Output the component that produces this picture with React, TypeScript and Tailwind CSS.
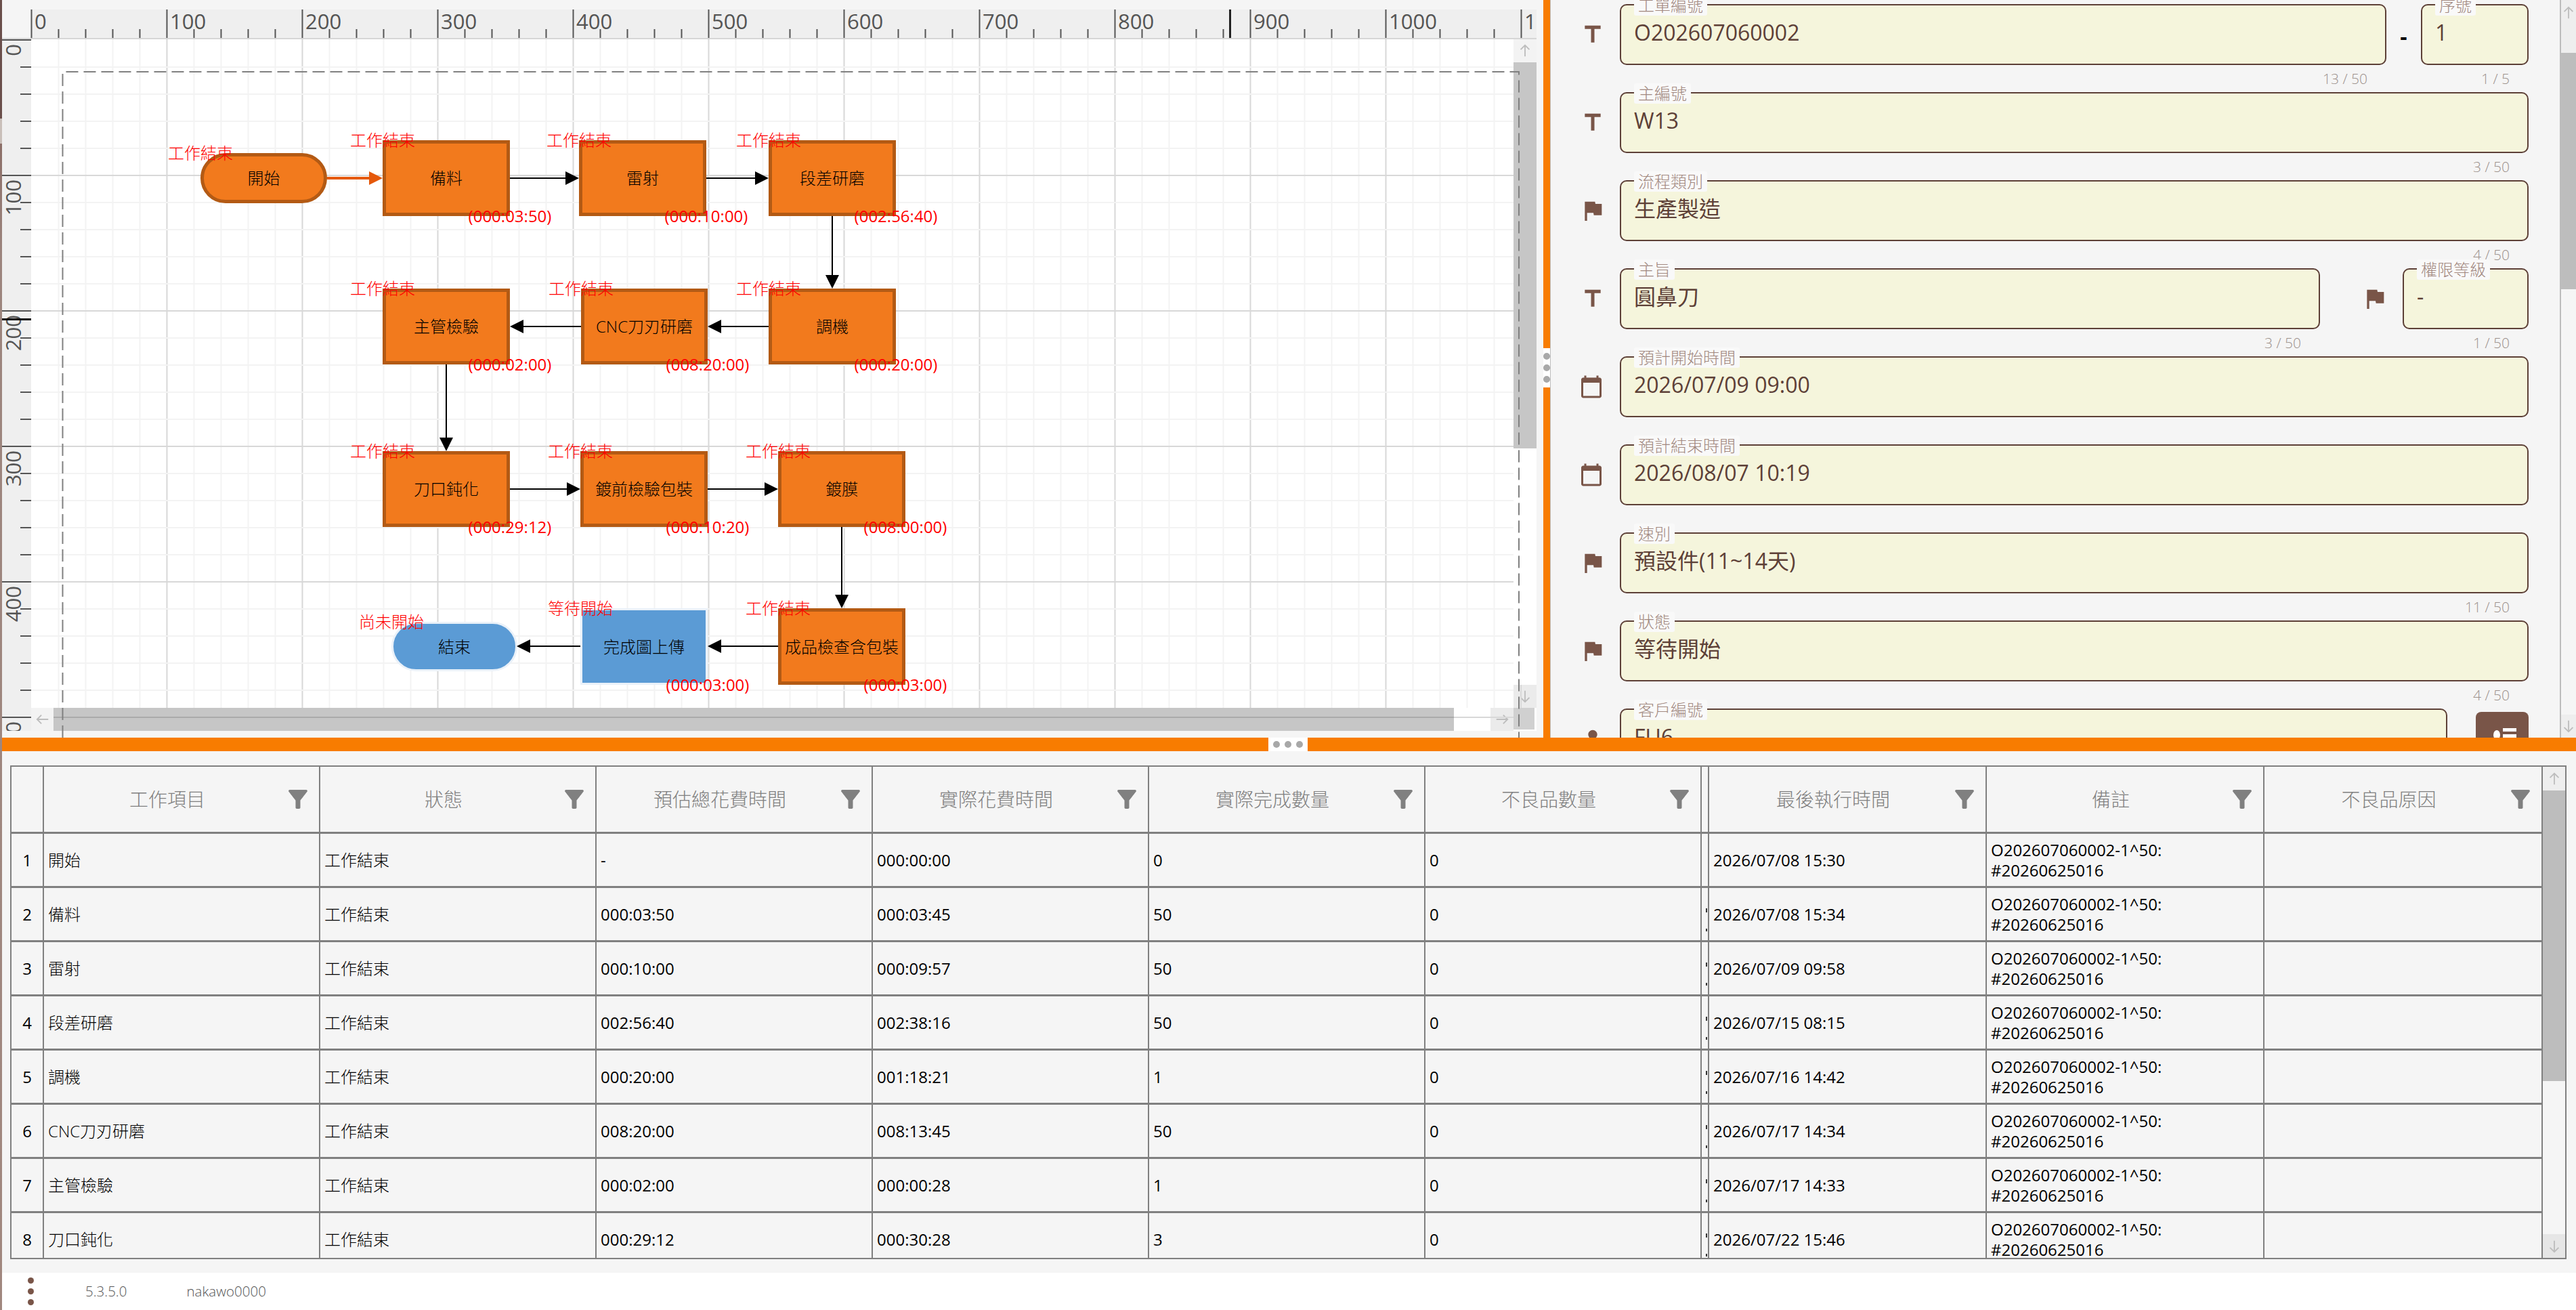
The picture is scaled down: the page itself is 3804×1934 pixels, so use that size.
import React from "react";

type FlowNode = {
  name: string;
  x: number;
  y: number;
  w: number;
  h: number;
  pill?: boolean;
  blue?: boolean;
  status: string;
  time?: string;
};

const nodes: FlowNode[] = [
  { name: "開始", x: 296, y: 226, w: 187, h: 74, pill: true, status: "工作結束" },
  { name: "備料", x: 565, y: 207, w: 188, h: 112, status: "工作結束", time: "(000:03:50)" },
  { name: "雷射", x: 855, y: 207, w: 188, h: 112, status: "工作結束", time: "(000:10:00)" },
  { name: "段差研磨", x: 1135, y: 207, w: 188, h: 112, status: "工作結束", time: "(002:56:40)" },
  { name: "主管檢驗", x: 565, y: 426, w: 188, h: 112, status: "工作結束", time: "(000:02:00)" },
  { name: "CNC刀刃研磨", x: 858, y: 426, w: 187, h: 112, status: "工作結束", time: "(008:20:00)" },
  { name: "調機", x: 1135, y: 426, w: 188, h: 112, status: "工作結束", time: "(000:20:00)" },
  { name: "刀口鈍化", x: 565, y: 666, w: 188, h: 112, status: "工作結束", time: "(000:29:12)" },
  { name: "鍍前檢驗包裝", x: 857, y: 666, w: 188, h: 112, status: "工作結束", time: "(000:10:20)" },
  { name: "鍍膜", x: 1149, y: 666, w: 188, h: 112, status: "工作結束", time: "(008:00:00)" },
  { name: "結束", x: 578, y: 918, w: 186, h: 73, pill: true, blue: true, status: "尚未開始" },
  { name: "完成圖上傳", x: 857, y: 898, w: 188, h: 113, blue: true, status: "等待開始", time: "(000:03:00)" },
  { name: "成品檢查含包裝", x: 1149, y: 898, w: 188, h: 113, status: "工作結束", time: "(000:03:00)" },
];

// x1,y1 -> x2,y2 where x2,y2 is the arrow tip
const arrows = [
  [483, 263, 565, 263, "#e5590b"],
  [753, 263, 855, 263, "#000"],
  [1043, 263, 1135, 263, "#000"],
  [1229, 319, 1229, 426, "#000"],
  [1135, 482, 1045, 482, "#000"],
  [858, 482, 753, 482, "#000"],
  [659, 538, 659, 666, "#000"],
  [753, 722, 857, 722, "#000"],
  [1045, 722, 1149, 722, "#000"],
  [1243, 778, 1243, 898, "#000"],
  [1149, 954, 1045, 954, "#000"],
  [857, 954, 763, 954, "#000"],
] as [number, number, number, number, string][];

const rows = [
  ["1", "開始", "工作結束", "-", "000:00:00", "0", "0", "2026/07/08 15:30"],
  ["2", "備料", "工作結束", "000:03:50", "000:03:45", "50", "0", "2026/07/08 15:34"],
  ["3", "雷射", "工作結束", "000:10:00", "000:09:57", "50", "0", "2026/07/09 09:58"],
  ["4", "段差研磨", "工作結束", "002:56:40", "002:38:16", "50", "0", "2026/07/15 08:15"],
  ["5", "調機", "工作結束", "000:20:00", "001:18:21", "1", "0", "2026/07/16 14:42"],
  ["6", "CNC刀刃研磨", "工作結束", "008:20:00", "008:13:45", "50", "0", "2026/07/17 14:34"],
  ["7", "主管檢驗", "工作結束", "000:02:00", "000:00:28", "1", "0", "2026/07/17 14:33"],
  ["8", "刀口鈍化", "工作結束", "000:29:12", "000:30:28", "3", "0", "2026/07/22 15:46"],
];

const range = (n: number) => Array.from({ length: n }, (_, i) => i);

const TitleIcon = () => (
  <svg viewBox="0 0 24 24" className="h-[40px] w-[40px] fill-[#795548]">
    <path d="M5 4v3h5.5v12h3V7H19V4z" />
  </svg>
);

const FlagIcon = () => (
  <svg viewBox="0 0 24 24" className="h-[40px] w-[40px] fill-[#795548]">
    <path d="M14.4 6L14 4H5v17h2v-7h5.6l.4 2h7V6z" />
  </svg>
);

const CalendarIcon = () => (
  <svg viewBox="0 0 24 24" className="h-[36px] w-[36px] fill-[#795548]">
    <path d="M20 3h-1V1h-2v2H7V1H5v2H4c-1.1 0-2 .9-2 2v16c0 1.1.9 2 2 2h16c1.1 0 2-.9 2-2V5c0-1.1-.9-2-2-2zm0 18H4V8h16v13z" />
  </svg>
);

const PersonIcon = () => (
  <svg viewBox="0 0 24 24" className="h-[40px] w-[40px] fill-[#795548]">
    <path d="M12 12c2.2 0 4-1.8 4-4s-1.8-4-4-4-4 1.8-4 4 1.8 4 4 4zm0 2c-2.7 0-8 1.3-8 4v2h16v-2c0-2.7-5.3-4-8-4z" />
  </svg>
);

const FilterIcon = () => (
  <svg viewBox="0 0 24 24" className="h-[42px] w-[42px] shrink-0 fill-[#808080]">
    <path d="M4.25 5.61C6.27 8.2 10 13 10 13v6c0 .55.45 1 1 1h2c.55 0 1-.45 1-1v-6s3.72-4.8 5.74-7.39c.51-.66.04-1.61-.79-1.61H5.04c-.83 0-1.3.95-.79 1.61z" />
  </svg>
);

const Arrow = ({ dir }: { dir: "up" | "down" | "left" | "right" }) => {
  const d = {
    up: "M12 21V3M5 10l7-7 7 7",
    down: "M12 3v18M5 14l7 7 7-7",
    left: "M21 12H3M10 5l-7 7 7 7",
    right: "M3 12h18M14 5l7 7-7 7",
  }[dir];
  return (
    <svg viewBox="0 0 24 24" className="h-[22px] w-[22px] fill-none stroke-[#bdbdbd] stroke-2">
      <path d={d} />
    </svg>
  );
};

const Field = ({
  label,
  value,
  counter,
  className,
}: {
  label: string;
  value: string;
  counter?: string;
  className: string;
}) => (
  <div className={`relative flex h-[90px] items-center rounded-[10px] border-2 border-[#5d4037] bg-[#f5f5dc] pb-[6px] pl-[19px] text-[32px] text-[#5d4037] ${className}`}>
    {value}
    <span className="absolute left-[19px] top-[-15px] h-[30px] rounded-[3px] bg-[#f9f9f9] px-[6px] text-[24px] font-light leading-[30px] text-[#a1887f]">
      {label}
    </span>
    {counter && (
      <span className="absolute right-[26px] top-[99px] text-[21px] font-light leading-[18px] text-[#9c918c]">
        {counter}
      </span>
    )}
  </div>
);

const FormRow = ({ icon, children }: { icon: React.ReactNode; children: React.ReactNode }) => (
  <div className="flex h-[130px] shrink-0 items-start">
    <div className="flex h-[90px] w-[102px] shrink-0 items-center pl-[42px]">{icon}</div>
    {children}
  </div>
);

const FormPanel = () => (
  <div className="flex h-full min-w-0 flex-1 bg-[#f5f5f5]">
    <div className="h-full flex-1 overflow-hidden pr-[46px] pt-[6px]">
      <FormRow icon={<TitleIcon />}>
        <Field label="工單編號" value="O202607060002" counter="13 / 50" className="w-[1132px]" />
        <div className="flex h-[90px] w-[51px] items-center justify-center pt-[6px] text-[32px] font-bold text-black">-</div>
        <Field label="序號" value="1" counter="1 / 5" className="w-[159px]" />
      </FormRow>
      <FormRow icon={<TitleIcon />}>
        <Field label="主編號" value="W13" counter="3 / 50" className="flex-1" />
      </FormRow>
      <FormRow icon={<FlagIcon />}>
        <Field label="流程類別" value="生產製造" counter="4 / 50" className="flex-1" />
      </FormRow>
      <FormRow icon={<TitleIcon />}>
        <Field label="主旨" value="圓鼻刀" counter="3 / 50" className="w-[1034px]" />
        <div className="flex h-[90px] w-[122px] items-center justify-center pl-[40px]">
          <FlagIcon />
        </div>
        <Field label="權限等級" value="-" counter="1 / 50" className="w-[186px]" />
      </FormRow>
      <FormRow icon={<CalendarIcon />}>
        <Field label="預計開始時間" value="2026/07/09 09:00" className="flex-1" />
      </FormRow>
      <FormRow icon={<CalendarIcon />}>
        <Field label="預計結束時間" value="2026/08/07 10:19" className="flex-1" />
      </FormRow>
      <FormRow icon={<FlagIcon />}>
        <Field label="速別" value="預設件(11~14天)" counter="11 / 50" className="flex-1" />
      </FormRow>
      <FormRow icon={<FlagIcon />}>
        <Field label="狀態" value="等待開始" counter="4 / 50" className="flex-1" />
      </FormRow>
      <FormRow icon={<PersonIcon />}>
        <Field label="客戶編號" value="FU6" className="w-[1222px]" />
        <div className="relative ml-[42px] mt-[5px] h-[80px] w-[78px] rounded-[8px] bg-[#795548]">
          <svg viewBox="0 0 36 40" className="absolute left-[26px] top-[22px] h-[40px] w-[36px] fill-white">
            <ellipse cx="5" cy="12" rx="5" ry="7" />
            <rect x="14" y="2" width="20" height="5" />
            <rect x="14" y="11" width="20" height="5" />
          </svg>
        </div>
      </FormRow>
    </div>
    <div className="flex h-full w-[24px] shrink-0 flex-col border-l-2 border-[#bdbdbd]">
      <div className="flex h-[78px] items-start justify-center bg-[#eeeeee] pt-[8px]">
        <Arrow dir="up" />
      </div>
      <div className="h-[349px] bg-[#bdbdbd]" />
      <div className="flex-1" />
      <div className="flex h-[34px] items-center justify-center bg-[#eeeeee]">
        <Arrow dir="down" />
      </div>
    </div>
  </div>
);

const Rulers = () => (
  <>
    <svg width={2269} height={44} className="absolute left-0 top-[14px]">
      <rect width={2269} height={44} fill="#efefef" />
      <rect x={3} width={43} height={44} fill="#f5f5f5" />
      {range(56).map((i) => {
        const x = 45.5 + i * 40;
        const major = i % 5 === 0;
        return <rect key={i} x={x} y={major ? 0 : 29} width={2} height={major ? 44 : 15} fill="#555" />;
      })}
      {range(12).map((i) => (
        <text key={i} x={51 + i * 200} y={29} fontSize={31} fontWeight={400} fill="#555">
          {i * 100}
        </text>
      ))}
      <rect x={1815} width={3} height={44} fill="#222" />
      <rect y={42} x={3} width={2266} height={2} fill="#d6d6d6" />
    </svg>
    <svg width={46} height={1021} className="absolute left-0 top-[58px]">
      <rect x={3} width={43} height={1021} fill="#efefef" />
      {range(26).map((i) => {
        const y = i * 40;
        const major = i % 5 === 0;
        return <rect key={i} x={major ? 3 : 30} y={y} width={major ? 43 : 16} height={2} fill="#555" />;
      })}
      {range(6).map((i) => (
        <text
          key={i}
          transform={`translate(31 ${i * 200 + 7}) rotate(-90)`}
          textAnchor="end"
          fontSize={31}
          fontWeight={400}
          fill="#555"
        >
          {i * 100}
        </text>
      ))}
      <rect x={3} y={412} width={43} height={3} fill="#111" />
    </svg>
  </>
);

const FlowCanvas = () => (
  <div className="relative h-full w-[2279px] shrink-0 overflow-hidden bg-[#f5f5f5]">
    <div className="absolute left-[46px] top-[58px] h-[1021px] w-[2223px] bg-white" />
    <Rulers />

    {/* canvas grid, page border and connectors */}
    <svg width={2279} height={1089} className="absolute left-0 top-0">
      {range(55).map((i) => {
        const x = 45.5 + i * 40;
        const major = i % 5 === 0;
        if (i === 0 || x > 2235) return null;
        return <rect key={i} x={x} y={58} width={2} height={987} fill={major ? "#d8d8d8" : "#f3f3f3"} />;
      })}
      {range(26).map((i) => {
        const y = 58 + i * 40;
        const major = i % 5 === 0;
        if (i === 0) return null;
        return <rect key={i} x={46} y={y} width={2189} height={2} fill={major ? "#d8d8d8" : "#f3f3f3"} />;
      })}
    </svg>

    {/* scrollbars */}
    <div className="absolute left-[2235px] top-[58px] flex h-[987px] w-[34px] flex-col">
      <div className="flex h-[34px] items-center justify-center bg-[#f3f3f3]">
        <Arrow dir="up" />
      </div>
      <div className="h-[570px] bg-[#c6c6c6]" />
      <div className="flex-1 bg-white" />
      <div className="flex h-[34px] items-center justify-center bg-[#ebebeb]">
        <Arrow dir="down" />
      </div>
    </div>
    <div className="absolute left-[46px] top-[1045px] flex h-[34px] w-[2189px]">
      <div className="flex w-[33px] items-center justify-center bg-[#f3f3f3]">
        <Arrow dir="left" />
      </div>
      <div className="w-[2068px] bg-[#c6c6c6]" />
      <div className="flex-1 bg-white" />
      <div className="flex w-[34px] items-center justify-center bg-[#ebebeb]">
        <Arrow dir="right" />
      </div>
    </div>
    <div className="absolute left-[2235px] top-[1045px] h-[32px] w-[31px] bg-[#d0d0d0]" />

    <svg width={2279} height={1089} className="absolute left-0 top-0">
      <rect x={79} y={1058} width={2068} height={2} fill="#aaaaaa" />
      <rect x={2147} y={1058} width={88} height={2} fill="#d8d8d8" />
      <rect x={2245} y={1011} width={2} height={34} fill="#d8d8d8" />
      <path
        d="M92.5 1089V106H2243V1089"
        fill="none"
        stroke="#808080"
        strokeWidth={2}
        strokeDasharray="18 8"
      />
    </svg>

    {nodes.map((n) => (
      <div
        key={n.name}
        className={`absolute flex items-center justify-center text-[24px] font-light text-black ${n.pill ? "rounded-[37px]" : ""} ${
          n.blue ? "border-[3px] border-[#eaf1f9] bg-[#5b9bd5]" : "border-[5px] border-[#b35a14] bg-[#f27a1d]"
        }`}
        style={{ left: n.x, top: n.y, width: n.w, height: n.h }}
      >
        <span className="whitespace-nowrap">{n.name}</span>
      </div>
    ))}

    <svg width={2279} height={1089} className="absolute left-0 top-0">
      {arrows.map(([x1, y1, x2, y2, color], i) => {
        const horizontal = y1 === y2;
        const s = horizontal ? Math.sign(x2 - x1) : Math.sign(y2 - y1);
        const head = horizontal
          ? `${x2},${y2} ${x2 - s * 20},${y2 - 10} ${x2 - s * 20},${y2 + 10}`
          : `${x2},${y2} ${x2 - 10},${y2 - s * 20} ${x2 + 10},${y2 - s * 20}`;
        return (
          <g key={i}>
            <line
              x1={x1}
              y1={y1}
              x2={horizontal ? x2 - s * 18 : x2}
              y2={horizontal ? y2 : y2 - s * 18}
              stroke={color}
              strokeWidth={i === 0 ? 4 : 2}
            />
            <polygon points={head} fill={color} />
          </g>
        );
      })}
    </svg>

    {nodes.map((n) => (
      <React.Fragment key={n.name}>
        <span
          className="absolute -translate-x-1/2 -translate-y-1/2 whitespace-nowrap text-[24px] font-light leading-none text-[#ff0000]"
          style={{ left: n.x, top: n.y }}
        >
          {n.status}
        </span>
        {n.time && (
          <span
            className="absolute -translate-x-1/2 -translate-y-1/2 whitespace-nowrap text-[24px] leading-none text-[#ff0000]"
            style={{ left: n.x + n.w, top: n.y + n.h }}
          >
            {n.time}
          </span>
        )}
      </React.Fragment>
    ))}
  </div>
);

const headCell = "flex h-full items-center border-r-2 border-[#808080] pl-[10px] pr-[10px] text-[28px] font-light text-[#808080]";
const bodyCell = "flex h-full items-center border-r-2 border-[#808080] px-[6px] text-black";

const HeadCell = ({ title, w }: { title: string; w: string }) => (
  <div className={`${headCell} ${w}`}>
    <span className="flex-1 text-center">{title}</span>
    <FilterIcon />
  </div>
);

const Table = () => (
  <div className="ml-[15px] mt-[21px] flex h-[729px] w-[3775px] border-2 border-[#808080] text-[24px]">
    <div className="w-[3738px] overflow-hidden">
      <div className="flex h-[99px] border-b-[3px] border-[#808080]">
        <div className="h-full w-[48px] border-r-2 border-[#808080]" />
        <HeadCell title="工作項目" w="w-[408px]" />
        <HeadCell title="狀態" w="w-[408px]" />
        <HeadCell title="預估總花費時間" w="w-[408px]" />
        <HeadCell title="實際花費時間" w="w-[408px]" />
        <HeadCell title="實際完成數量" w="w-[408px]" />
        <HeadCell title="不良品數量" w="w-[408px]" />
        <div className="h-full w-[11px] border-r-2 border-[#808080]" />
        <HeadCell title="最後執行時間" w="w-[410px]" />
        <HeadCell title="備註" w="w-[410px]" />
        <HeadCell title="不良品原因" w="w-[411px]" />
      </div>
      {rows.map((r, i) => (
        <div key={r[0]} className="flex h-[80px] shrink-0 border-b-[3px] border-[#808080] bg-[#f5f5f5]">
          <div className="flex h-full w-[48px] items-center justify-center border-r-2 border-[#808080] text-black">{r[0]}</div>
          {r.slice(1, 7).map((c, j) => (
            <div key={j} className={`${bodyCell} w-[408px] ${j < 2 ? "font-light" : ""}`}>
              {c}
            </div>
          ))}
          <div className="flex h-full w-[11px] flex-col items-end border-r-2 border-[#808080] pr-[1px] pt-[30px]">
            {i > 0 && (
              <>
                <span className="h-[6px] w-[2px] bg-[#333]" />
                <span className="mt-[24px] h-[4px] w-[2px] bg-[#333]" />
              </>
            )}
          </div>
          <div className={`${bodyCell} w-[410px]`}>{r[7]}</div>
          <div className={`${bodyCell} w-[410px] leading-[30px]`}>
            <div>
              O202607060002-1^50:
              <br />
              #20260625016
            </div>
          </div>
          <div className={`${bodyCell} w-[411px]`} />
        </div>
      ))}
    </div>
    <div className="flex h-full w-[33px] flex-col">
      <div className="flex h-[35px] items-center justify-center bg-[#eeeeee]">
        <Arrow dir="up" />
      </div>
      <div className="h-[429px] bg-[#bdbdbd]" />
      <div className="flex-1" />
      <div className="flex h-[35px] items-center justify-center bg-[#e6e6e6]">
        <Arrow dir="down" />
      </div>
    </div>
  </div>
);

export default function App() {
  return (
    <div
      lang="zh-TW"
      className="relative flex h-[1934px] w-[3804px] flex-col overflow-hidden bg-white font-[family-name:'Open_Sans','Noto_Sans_CJK_TC',sans-serif]"
    >
      <div className="flex h-[1089px] shrink-0">
        <FlowCanvas />
        <div className="relative w-[11px] shrink-0 border-r border-[#bdbdbd] bg-[#f87c00]">
          <div className="absolute left-0 top-[514px] flex h-[58px] w-[10px] flex-col items-center justify-evenly bg-white">
            <span className="h-[10px] w-[10px] rounded-full bg-[#a8a8a8]" />
            <span className="h-[10px] w-[10px] rounded-full bg-[#a8a8a8]" />
            <span className="h-[10px] w-[10px] rounded-full bg-[#a8a8a8]" />
          </div>
        </div>
        <FormPanel />
      </div>

      <div className="flex h-[20px] shrink-0 justify-center bg-[#f87c00]">
        <div className="flex w-[58px] items-center justify-center gap-[7px] bg-white">
          <span className="h-[10px] w-[10px] rounded-full bg-[#a8a8a8]" />
          <span className="h-[10px] w-[10px] rounded-full bg-[#a8a8a8]" />
          <span className="h-[10px] w-[10px] rounded-full bg-[#a8a8a8]" />
        </div>
      </div>

      <div className="h-[770px] shrink-0 bg-[#f5f5f5]">
        <Table />
      </div>

      <div className="flex h-[55px] items-center text-[20.5px] font-light text-[#555]">
        <div className="ml-[41px] flex w-[9px] flex-col gap-[7px]">
          <span className="h-[9px] w-[9px] rounded-full bg-[#795548]" />
          <span className="h-[9px] w-[9px] rounded-full bg-[#795548]" />
          <span className="h-[9px] w-[9px] rounded-full bg-[#795548]" />
        </div>
        <span className="ml-[76px]">5.3.5.0</span>
        <span className="ml-[88px]">nakawo0000</span>
      </div>

      {/* window edge strip */}
      <div className="absolute left-0 top-0 h-full w-[3px] bg-[linear-gradient(to_bottom,#6a4f4b_0,#6a4f4b_175px,#c9bfb9_175px,#c9bfb9_212px,#8c6f68_212px,#9c857e_380px,#a1887f_100%)]" />
    </div>
  );
}
